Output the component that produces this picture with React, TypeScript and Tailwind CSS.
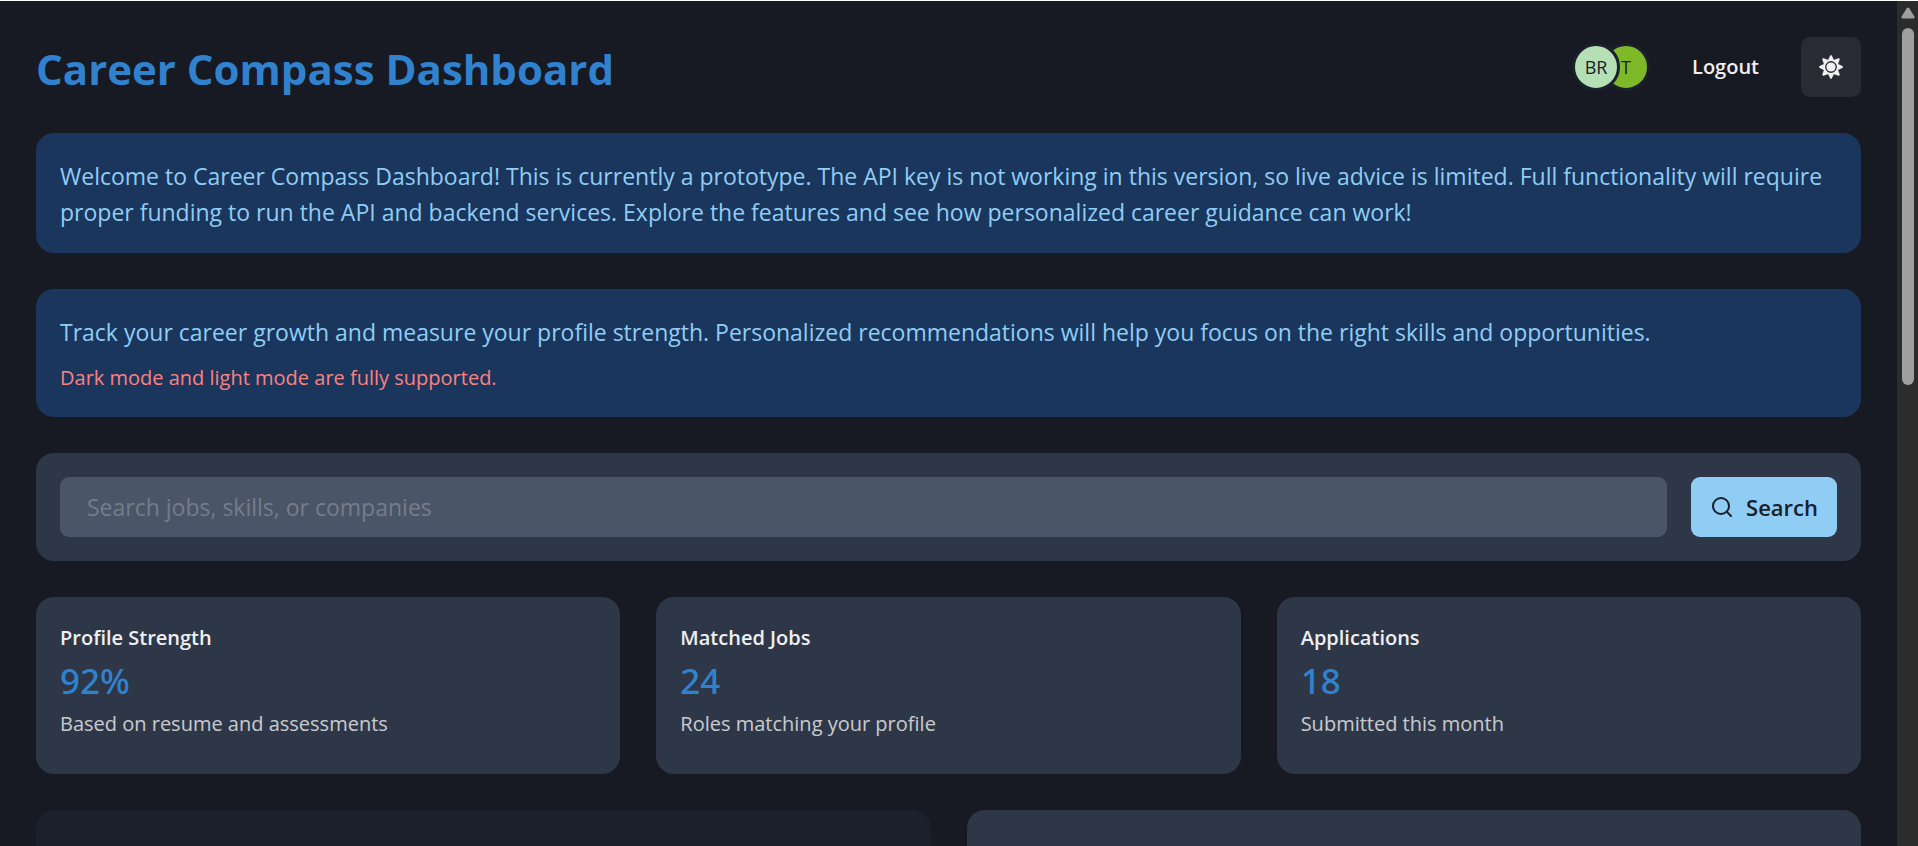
import { Search } from "lucide-react";

const stats = [
  { label: "Profile Strength", value: "92%", help: "Based on resume and assessments" },
  { label: "Matched Jobs", value: "24", help: "Roles matching your profile" },
  { label: "Applications", value: "18", help: "Submitted this month" },
];

const rays = [0, 45, 90, 135, 180, 225, 270, 315];

function SunIcon() {
  return (
    <svg viewBox="0 0 24 24" className="size-6" fill="currentColor" aria-hidden="true">
      {rays.map((angle) => (
        <path key={angle} d="M11.1 .7Q12 -.7 12.9 .7L15.4 6H8.6Z" transform={`rotate(${angle} 12 12)`} />
      ))}
      <path
        fillRule="evenodd"
        d="M12 4.6a7.4 7.4 0 1 0 0 14.8a7.4 7.4 0 1 0 0-14.8ZM12 6.1a5.9 5.9 0 1 1 0 11.8a5.9 5.9 0 1 1 0-11.8Z"
      />
      <circle cx="12" cy="12" r="4.6" />
    </svg>
  );
}

function Header() {
  return (
    <header className="flex items-center justify-between">
      <h1 className="pt-1 text-[42px] leading-[56px] font-bold text-[#3182ce]">Career Compass Dashboard</h1>
      <div className="flex items-center">
        <div className="flex items-center text-lg leading-none text-[#1a202c]">
          <span className="z-10 flex size-12 items-center justify-center rounded-full border-3 border-[#1a202c] bg-[#b5dfb4]">
            BR
          </span>
          <span className="-ml-[18px] flex size-12 items-center justify-center rounded-full border-3 border-[#1a202c] bg-[#7db928]">
            T
          </span>
        </div>
        <button type="button" className="ml-6 h-12 px-[18px] text-xl font-semibold">
          Logout
        </button>
        <button
          type="button"
          aria-label="Toggle color mode"
          className="ml-6 flex size-[60px] items-center justify-center rounded-[9px] bg-[#292b34]"
        >
          <SunIcon />
        </button>
      </div>
    </header>
  );
}

function Scrollbar() {
  return (
    <div className="flex w-[21px] shrink-0 flex-col items-center bg-[#2c2c2c]" aria-hidden="true">
      <svg viewBox="0 0 14 12" className="mt-[6px] h-3 w-[14px]" fill="#9f9f9f">
        <path d="M5.8 1.2Q7 -.2 8.2 1.2L13.4 9.4Q14 11.6 12 11.6H2Q0 11.6 .6 9.4Z" />
      </svg>
      <div className="mt-[9px] h-[357px] w-3 rounded-full bg-[#9f9f9f]" />
    </div>
  );
}

export default function App() {
  return (
    <div className="flex h-screen overflow-hidden border-t border-white bg-[#171923] font-['Open_Sans',sans-serif] text-[#efefef]">
      <main className="flex min-w-0 flex-1 flex-col gap-9 overflow-hidden p-9">
        <Header />
        <section className="rounded-[18px] bg-[#1a365d] px-6 pt-[25px] pb-[23px] text-[23px] leading-9 text-[#90cdf4]">
          <p>
            Welcome to Career Compass Dashboard! This is currently a prototype. The API key is not working in this
            version, so live advice is limited. Full functionality will require proper funding to run the API and
            backend services. Explore the features and see how personalized career guidance can work!
          </p>
        </section>
        <section className="rounded-[18px] bg-[#1a365d] px-6 pt-[25px] pb-[23px]">
          <p className="text-[23px] leading-9 text-[#90cdf4]">
            Track your career growth and measure your profile strength. Personalized recommendations will help you
            focus on the right skills and opportunities.
          </p>
          <p className="mt-3 text-xl leading-8 text-[#fc8181]">Dark mode and light mode are fully supported.</p>
        </section>
        <form className="flex gap-6 rounded-[18px] bg-[#2d3748] p-6" onSubmit={(event) => event.preventDefault()}>
          <input
            type="text"
            aria-label="Search jobs, skills, or companies"
            placeholder="Search jobs, skills, or companies"
            className="h-[60px] min-w-0 flex-1 rounded-[9px] bg-[#4a5568] px-[27px] text-[23px] placeholder:text-[#757d8a]"
          />
          <button
            type="submit"
            className="flex h-[60px] w-[146px] items-center justify-center gap-3 rounded-[9px] bg-[#90cdf4] text-[22px] font-semibold text-[#1a202c]"
          >
            <Search className="size-6" strokeWidth={2} />
            Search
          </button>
        </form>
        <section className="grid grid-cols-3 gap-9">
          {stats.map((stat) => (
            <dl key={stat.label} className="rounded-[18px] bg-[#2d3748] px-6 pt-[25px] pb-[35px]">
              <dt className="text-xl leading-8 font-semibold">{stat.label}</dt>
              <dd className="font-['Noto_Sans',sans-serif] text-[35px] leading-[54px] font-medium text-[#3182ce]">{stat.value}</dd>
              <dd className="text-xl leading-[31px] opacity-80">{stat.help}</dd>
            </dl>
          ))}
        </section>
        <section className="grid flex-none grid-cols-2 gap-9">
          <div className="h-96 rounded-[18px] bg-[#1a202c]" />
          <div className="h-96 rounded-[18px] bg-[#2d3748]" />
        </section>
      </main>
      <Scrollbar />
    </div>
  );
}
